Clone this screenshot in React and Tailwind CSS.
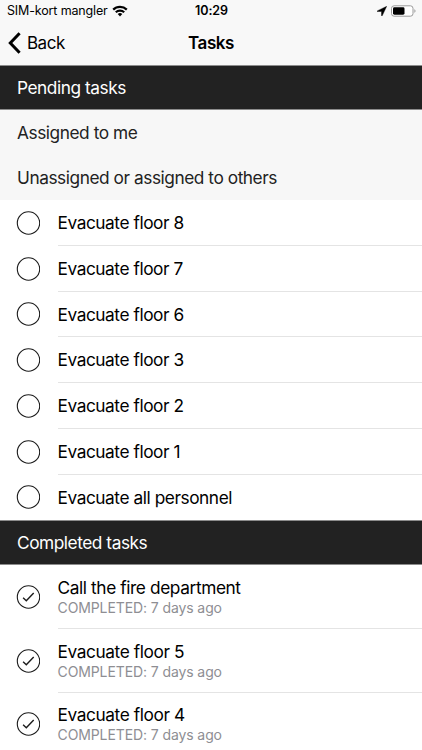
const pendingTasks = [
  "Evacuate floor 8",
  "Evacuate floor 7",
  "Evacuate floor 6",
  "Evacuate floor 3",
  "Evacuate floor 2",
  "Evacuate floor 1",
  "Evacuate all personnel",
];

const completedTasks = [
  { title: "Call the fire department", when: "7 days ago" },
  { title: "Evacuate floor 5", when: "7 days ago" },
  { title: "Evacuate floor 4", when: "7 days ago" },
];

function WifiIcon() {
  return (
    <svg viewBox="0 0 16 12" className="mb-px h-3 w-4" fill="none" stroke="black" strokeWidth="2.2">
      <path d="M1.2 4.6a9.7 9.7 0 0 1 13.6 0" />
      <path d="M3.8 7.3a6 6 0 0 1 8.4 0" />
      <path d="M8 11.4 5.7 9.1a3.3 3.3 0 0 1 4.6 0Z" fill="black" stroke="none" />
    </svg>
  );
}

function LocationIcon() {
  return (
    <svg viewBox="0 0 10 10" className="h-[10px] w-[10px]">
      <path d="M9.7.3.2 4.9c-.3.2-.2.6.2.6h4.100v4.100c0 .4.5.5.700.2Z" stroke="black" strokeWidth="0.4" />
    </svg>
  );
}

function BatteryIcon() {
  return (
    <svg viewBox="0 0 25 12" className="h-3 w-[25px]">
      <rect x="0.5" y="0.8" width="21.5" height="10.4" rx="2.6" fill="white" stroke="#9a9a9a" />
      <rect x="2" y="2.3" width="11.5" height="7.4" rx="1.4" />
      <path d="M23.4 4.2v3.6c.7-.3 1.1-1 1.1-1.8s-.4-1.5-1.1-1.8Z" fill="#9a9a9a" />
    </svg>
  );
}

function StatusBar() {
  return (
    <div className="grid h-[22px] grid-cols-[1fr_auto_1fr] items-center pr-[6px] pl-[7px]">
      <div className="flex items-center gap-[4px] text-[12.5px] tracking-[-0.15px]">
        SIM-kort mangler
        <WifiIcon />
      </div>
      <div className="text-[12.5px] font-semibold tracking-[-0.1px]">10:29</div>
      <div className="flex items-center justify-end gap-1">
        <LocationIcon />
        <BatteryIcon />
      </div>
    </div>
  );
}

function NavBar() {
  return (
    <div className="grid h-[43px] grid-cols-[1fr_auto_1fr] items-center px-2">
      <button className="flex items-center gap-[6px] text-[17px] tracking-[-0.5px]">
        <svg viewBox="0 0 13 22" className="mb-[2px] h-[22px] w-[13px]" fill="none" stroke="black" strokeWidth="3">
          <path d="M11.6 1.3 2.3 11l9.3 9.7" />
        </svg>
        Back
      </button>
      <h1 className="text-[17px] font-semibold tracking-[-0.45px]">Tasks</h1>
    </div>
  );
}

function SectionHeader({ children }) {
  return (
    <h2 className="flex h-[45px] items-center border-y border-[#8c8c8c] bg-[#222] pl-[17px] text-[17.3px] tracking-[-0.46px] text-white">
      {children}
    </h2>
  );
}

function GroupLabel({ children }) {
  return (
    <div className="flex h-[45px] items-center bg-[#f7f7f7] pl-[17px] text-[17.3px] tracking-[-0.45px] text-[#222]">
      {children}
    </div>
  );
}

function StatusCircle({ checked = false }) {
  return (
    <svg viewBox="0 0 24 24" className="h-6 w-6 shrink-0" fill="none" stroke="#1a1a1a">
      <circle cx="12.5" cy="12" r="11.2" strokeWidth="1.1" />
      {checked && <path d="m7.1 12.8 3.2 3 7.4-7.8" strokeWidth="1.4" />}
    </svg>
  );
}

export default function App() {
  return (
    <div className="h-[750px] w-full overflow-hidden bg-white font-[Inter,sans-serif] text-black">
      <header className="bg-[#f8f8f8]">
        <StatusBar />
        <NavBar />
      </header>

      <SectionHeader>Pending tasks</SectionHeader>
      <GroupLabel>Assigned to me</GroupLabel>
      <GroupLabel>Unassigned or assigned to others</GroupLabel>
      <ul>
        {pendingTasks.map((title) => (
          <li key={title} className="group flex h-[45.77px] items-center gap-[17.5px] pl-4">
            <StatusCircle />
            <div className="flex h-full flex-1 items-center border-b border-[#e4e4e4] pt-[1.5px] text-[17.3px] tracking-[-0.44px] group-last:border-b-0 group-last:pt-0">
              {title}
            </div>
          </li>
        ))}
      </ul>

      <SectionHeader>Completed tasks</SectionHeader>
      <ul>
        {completedTasks.map(({ title, when }) => (
          <li key={title} className="flex h-[63.6px] items-center gap-[17.5px] pl-4">
            <StatusCircle checked />
            <div className="flex h-full flex-1 flex-col justify-center border-b border-[#e4e4e4] pt-px">
              <div className="text-[17.3px] leading-[22px] tracking-[-0.4px]">{title}</div>
              <div className="text-[14px] leading-[18px] tracking-[-0.1px] text-[#8e8e93]">
                COMPLETED: {when}
              </div>
            </div>
          </li>
        ))}
      </ul>
    </div>
  );
}
